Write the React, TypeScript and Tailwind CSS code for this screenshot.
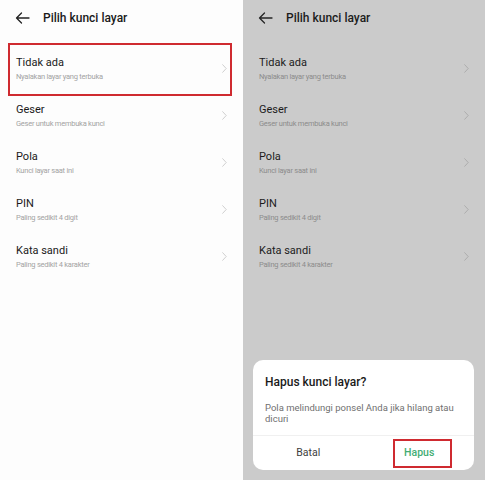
import React from "react"

type Option = {
  title: string
  desc: string
}

const options: Option[] = [
  { title: "Tidak ada", desc: "Nyalakan layar yang terbuka" },
  { title: "Geser", desc: "Geser untuk membuka kunci" },
  { title: "Pola", desc: "Kunci layar saat ini" },
  { title: "PIN", desc: "Paling sedikit 4 digit" },
  { title: "Kata sandi", desc: "Paling sedikit 4 karakter" },
]

function BackArrow({ color }: { color: string }) {
  return (
    <svg width="15" height="12" viewBox="0 0 15 12" fill="none">
      <path
        d="M14 6H1.5M6.5 1L1.5 6L6.5 11"
        stroke={color}
        strokeWidth="1.3"
        strokeLinecap="round"
        strokeLinejoin="round"
      />
    </svg>
  )
}

function Chevron({ color }: { color: string }) {
  return (
    <svg width="5" height="9" viewBox="0 0 5 9" fill="none">
      <path d="M0.7 0.7L4.2 4.5L0.7 8.3" stroke={color} strokeWidth="0.9" strokeLinecap="round" strokeLinejoin="round" />
    </svg>
  )
}

function Screen({ dimmed }: { dimmed?: boolean }) {
  const titleColor = dimmed ? "text-[#1c1c1c]" : "text-[#1a1a1a]"
  const descColor = dimmed ? "text-[#8c8c8c]" : "text-[#a3a3a3]"
  const chevron = dimmed ? "#a9a9a9" : "#c9c9c9"

  return (
    <div>
      <div className="h-[45px] flex items-start pt-[11px] pl-[15px] gap-[13px]">
        <div className="h-[14px] flex items-center">
          <BackArrow color={dimmed ? "#262626" : "#222222"} />
        </div>
        <span className={`text-[12px] leading-[14px] font-medium ${titleColor}`}>Pilih kunci layar</span>
      </div>

      {options.map((o, i) => (
        <div key={o.title} className="relative">
          <div className="h-[47px] flex items-center pl-[16px] pr-[16px]">
            <div className="flex-1">
              <div className={`text-[11px] leading-[14px] ${titleColor}`}>{o.title}</div>
              <div className={`mt-[2px] text-[7.5px] leading-[10px] tracking-[-0.25px] ${descColor}`}>{o.desc}</div>
            </div>
            <Chevron color={chevron} />
          </div>
          {i === 0 && !dimmed && (
            <div className="absolute left-[8px] right-[11px] -top-[2px] -bottom-[4px] border-2 border-[#cf2a30]" />
          )}
        </div>
      ))}
    </div>
  )
}

export default function App() {
  return (
    <div className="flex w-[485px] h-[480px] overflow-hidden font-['Roboto',sans-serif]">
      <div className="w-[243px] h-full bg-[#fdfdfd]">
        <Screen />
      </div>

      <div className="relative w-[242px] h-full bg-[#cbcbcb]">
        <Screen dimmed />

        <div className="absolute left-[10px] top-[360px] w-[221px] h-[110px] bg-white rounded-[10px] flex flex-col">
          <div className="px-[12px] pt-[14px]">
            <div className="text-[12px] leading-[16px] font-medium text-[#1a1a1a]">Hapus kunci layar?</div>
            <p className="mt-[12px] text-[9.5px] leading-[11px] text-[#707070]">
              Pola melindungi ponsel Anda jika hilang atau dicuri
            </p>
          </div>
          <div className="mt-auto h-[35px] border-t border-[#f0f0f0] flex">
            <div className="flex-1 flex items-center justify-center text-[10.5px] text-[#404040]">Batal</div>
            <div className="flex-1 flex items-center justify-center">
              <div className="ml-[7px] w-[59px] h-[29px] pr-[6px] border-2 border-[#cf2a30] flex items-center justify-center text-[10.5px] font-medium text-[#43ad74]">
                Hapus
              </div>
            </div>
          </div>
        </div>
      </div>
    </div>
  )
}
